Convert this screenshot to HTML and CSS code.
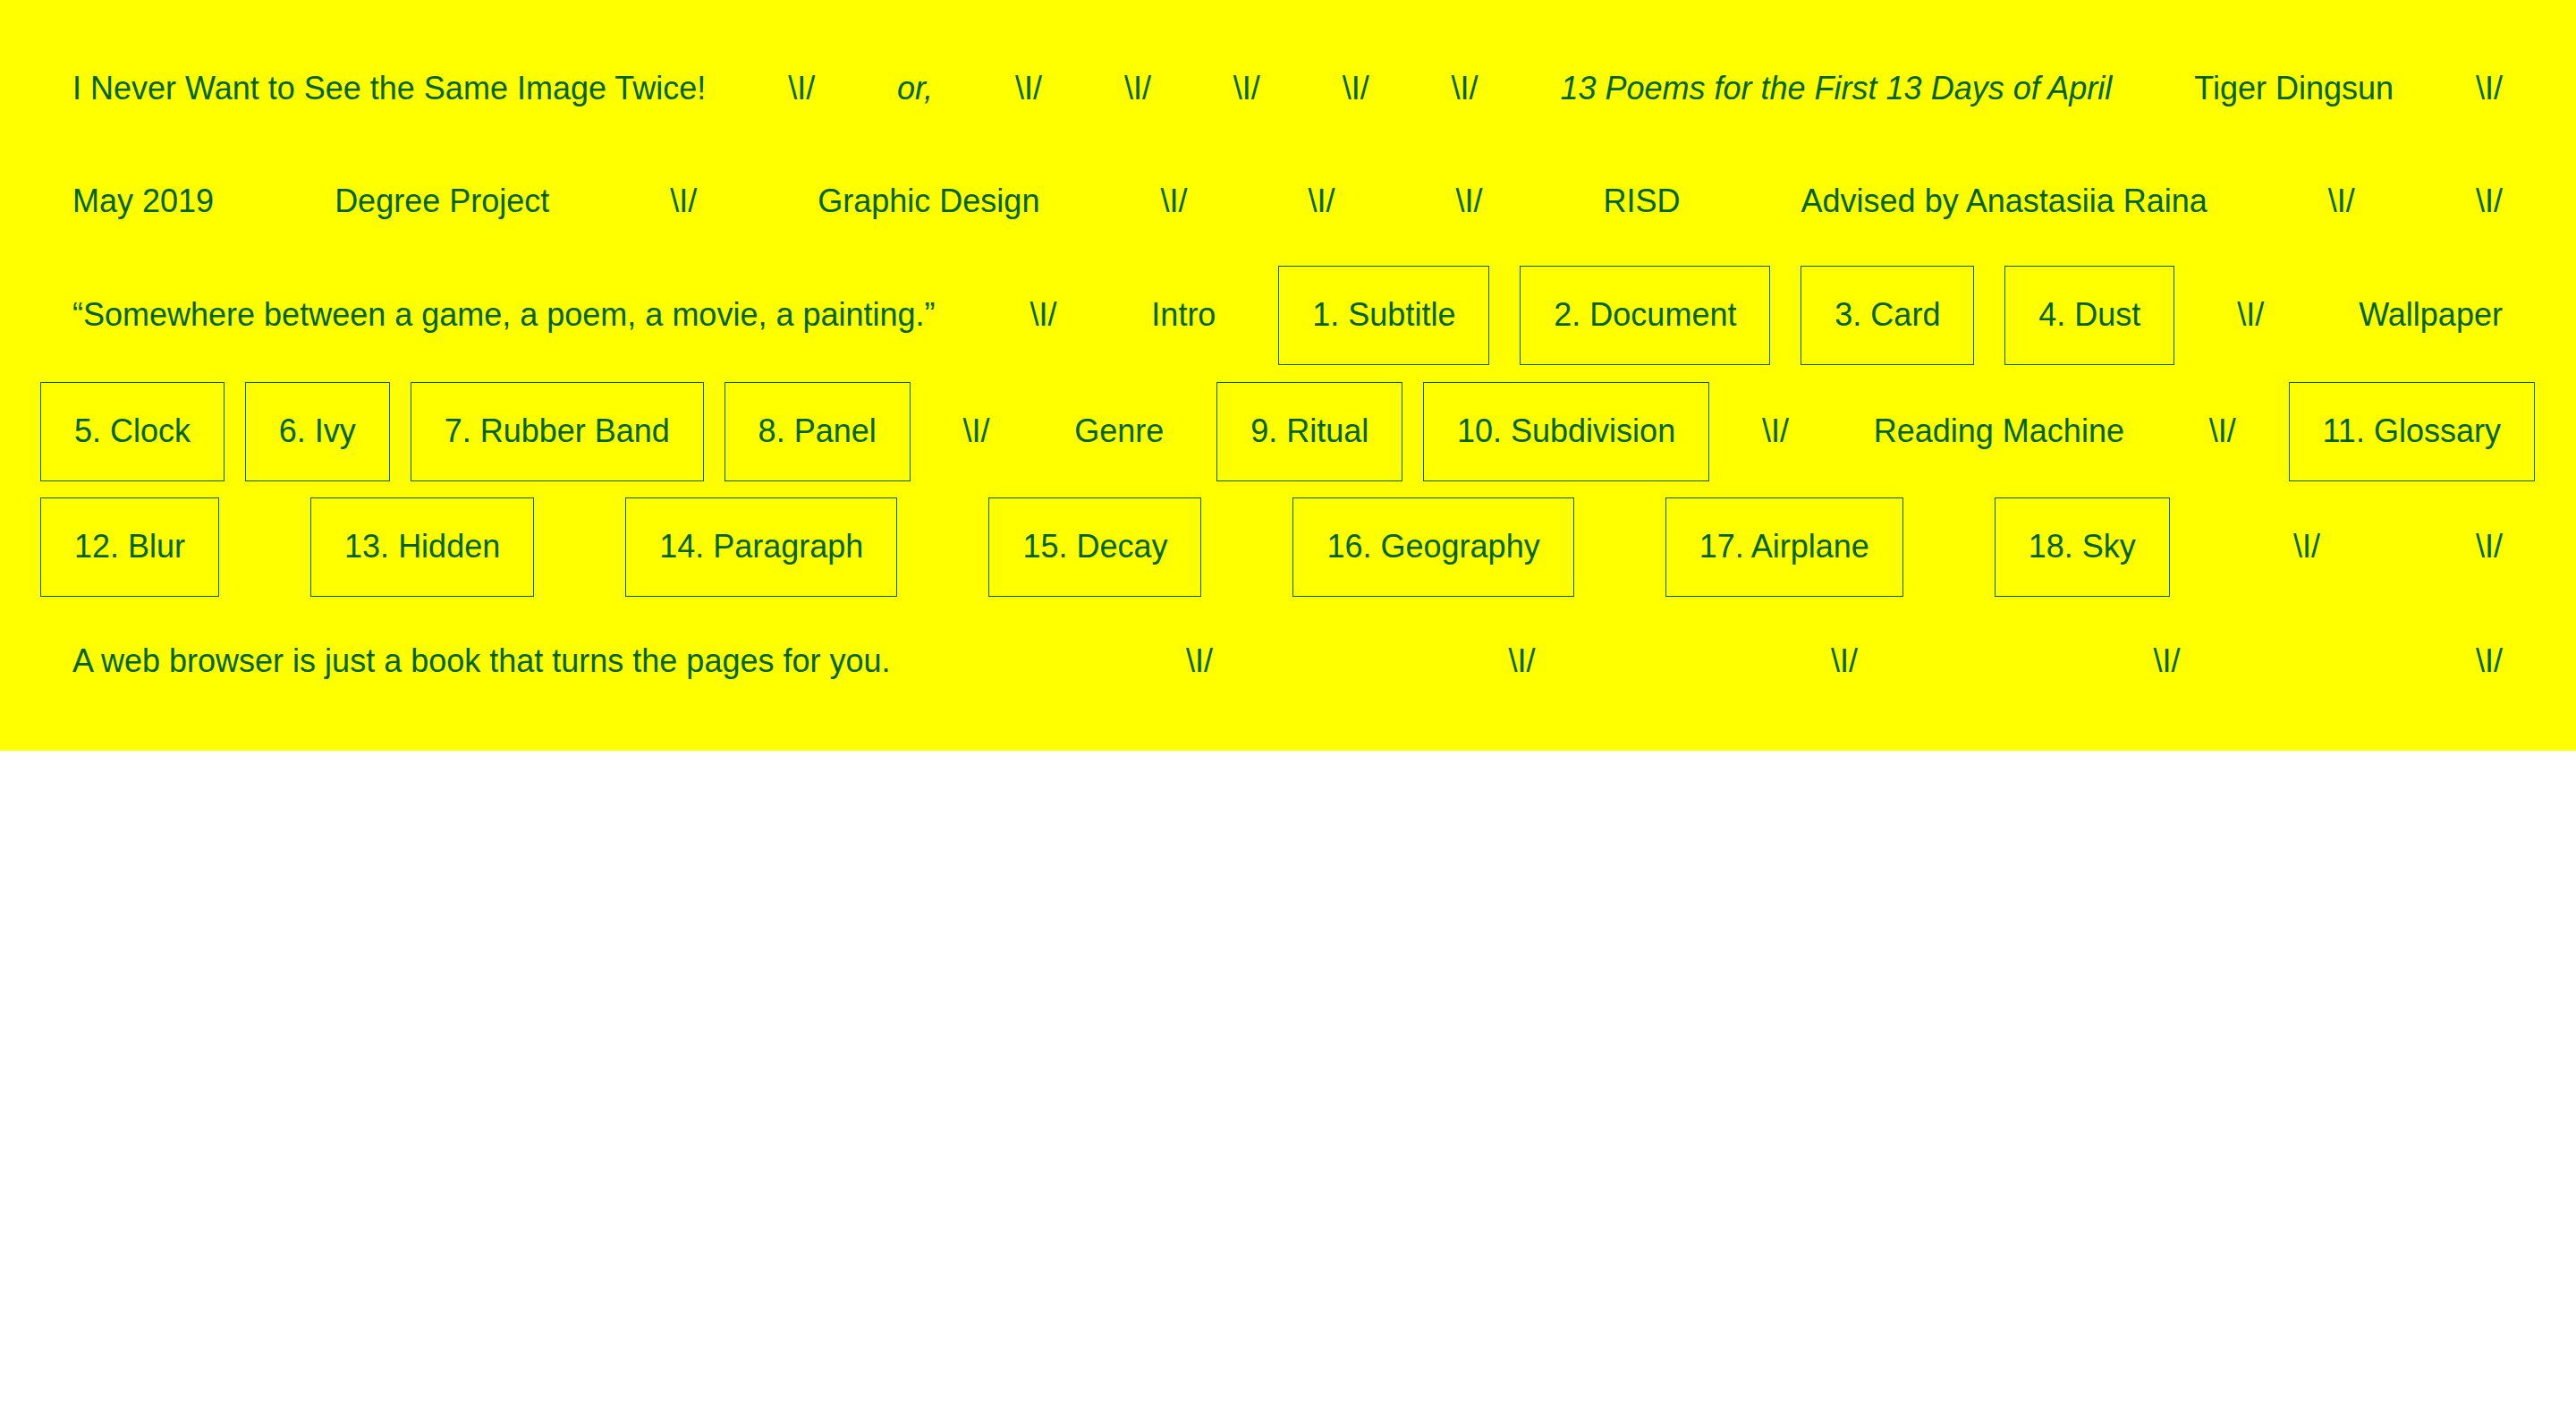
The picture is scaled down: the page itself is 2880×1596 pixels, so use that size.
FILE: index.html
```html
<!DOCTYPE html>
<html lang="en">
<head>
<meta charset="utf-8">
<title>I Never Want to See the Same Image Twice!</title>
<link rel="stylesheet" href="styles.css">
</head>
<body>
<main class="sheet">
  <div class="row">
    <span class="it">I Never Want to See the Same Image Twice!</span>
    <span class="it">\I/</span>
    <span class="it em">or,</span>
    <span class="it">\I/</span>
    <span class="it">\I/</span>
    <span class="it">\I/</span>
    <span class="it">\I/</span>
    <span class="it">\I/</span>
    <span class="it em">13 Poems for the First 13 Days of April</span>
    <span class="it">Tiger Dingsun</span>
    <span class="it">\I/</span>
  </div>
  <div class="row">
    <span class="it">May 2019</span>
    <span class="it">Degree Project</span>
    <span class="it">\I/</span>
    <span class="it">Graphic Design</span>
    <span class="it">\I/</span>
    <span class="it">\I/</span>
    <span class="it">\I/</span>
    <span class="it">RISD</span>
    <span class="it">Advised by Anastasiia Raina</span>
    <span class="it">\I/</span>
    <span class="it">\I/</span>
  </div>
  <div class="row">
    <span class="it">“Somewhere between a game, a poem, a movie, a painting.”</span>
    <span class="it">\I/</span>
    <span class="it">Intro</span>
    <a class="it box">1. Subtitle</a>
    <a class="it box">2. Document</a>
    <a class="it box">3. Card</a>
    <a class="it box">4. Dust</a>
    <span class="it">\I/</span>
    <span class="it">Wallpaper</span>
  </div>
  <div class="row">
    <a class="it box">5. Clock</a>
    <a class="it box">6. Ivy</a>
    <a class="it box">7. Rubber Band</a>
    <a class="it box">8. Panel</a>
    <span class="it">\I/</span>
    <span class="it">Genre</span>
    <a class="it box">9. Ritual</a>
    <a class="it box">10. Subdivision</a>
    <span class="it">\I/</span>
    <span class="it">Reading Machine</span>
    <span class="it">\I/</span>
    <a class="it box">11. Glossary</a>
  </div>
  <div class="row">
    <a class="it box">12. Blur</a>
    <a class="it box">13. Hidden</a>
    <a class="it box">14. Paragraph</a>
    <a class="it box">15. Decay</a>
    <a class="it box">16. Geography</a>
    <a class="it box">17. Airplane</a>
    <a class="it box">18. Sky</a>
    <span class="it">\I/</span>
    <span class="it">\I/</span>
  </div>
  <div class="row">
    <span class="it">A web browser is just a book that turns the pages for you.</span>
    <span class="it">\I/</span>
    <span class="it">\I/</span>
    <span class="it">\I/</span>
    <span class="it">\I/</span>
    <span class="it">\I/</span>
  </div>
</main>
</body>
</html>
```

FILE: styles.css
```css
html, body {
  margin: 0;
  padding: 0;
  background: #ffffff;
}

.sheet {
  background: #ffff00;
  color: #006400;
  font-family: "Liberation Sans", Arial, Helvetica, sans-serif;
  font-size: 36px;
  line-height: 37px;
  padding: 46px 46px 46.5px 45px;
  display: flex;
  flex-direction: column;
  gap: 18.5px;
}

.row {
  display: flex;
  justify-content: space-between;
  align-items: center;
}

.it {
  display: block;
  padding: 34px 36px 36px;
  white-space: nowrap;
  color: inherit;
  text-decoration: none;
}

.em {
  font-style: italic;
}

.box {
  border: 1px solid #006400;
  padding: 35px 37px 37px;
}
```
